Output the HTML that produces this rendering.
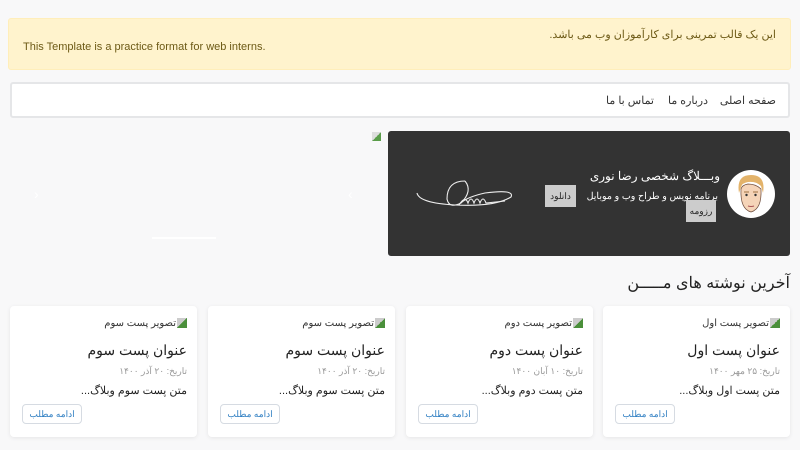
<!DOCTYPE html>
<html><head><meta charset="utf-8">
<style>
*{box-sizing:border-box;margin:0;padding:0}
body{width:800px;height:450px;overflow:hidden;background:#f8f8f9;font-family:"Liberation Sans","Noto Sans CJK SC",sans-serif;position:relative;direction:rtl}
.a{position:absolute}
.alert{left:8px;top:18px;width:783px;height:52px;background:#fff3cd;border:1px solid #ffeeba;border-radius:3px;color:#6d5a16;font-size:11px}
.nav{left:10px;top:82px;width:780px;height:36px;background:#fff;border:2px solid #e5e6e8;border-radius:3px;font-size:11px;color:#333}
.hero{left:388px;top:131px;width:402px;height:125px;background:#333;border-radius:3px;color:#fff}
.card{width:187px;height:131px;top:306px;background:#fff;border-radius:4px;box-shadow:0 1px 4px rgba(0,0,0,.08)}
.card .im{right:10px;top:12px;font-size:10px;color:#333}
.card .t{right:10px;top:36px;font-size:14px;color:#222}
.card .d{right:10px;top:60px;font-size:9px;color:#999}
.card .x{right:10px;top:78px;font-size:11px;color:#222}
.card .b{left:12px;top:98px;width:60px;height:20px;border:1px solid #d6dbe2;border-radius:4px;font-size:9px;color:#2b7cc1;text-align:center;line-height:18px}
.bi{display:inline-block;width:10px;height:10px;background:linear-gradient(135deg,#ccc 50%,#4a8f3a 50%);vertical-align:middle;margin-left:1px}
</style></head><body>
<div class="a alert">
 <div class="a" style="right:14px;top:9px">این یک قالب تمرینی برای کارآموزان وب می باشد.</div>
 <div class="a" style="left:14px;top:22px;direction:ltr">This Template is a practice format for web interns.</div>
</div>
<div class="a nav">
 <div class="a" style="right:12px;top:10px">صفحه اصلی</div>
 <div class="a" style="right:80px;top:10px">درباره ما</div>
 <div class="a" style="right:134px;top:10px">تماس با ما</div>
</div>
<div class="a" style="left:372px;top:132px;width:9px;height:9px;background:linear-gradient(135deg,#ddd 50%,#5a9d4a 50%)"></div>
<div class="a" style="left:34px;top:186px;color:#fff;font-size:14px">‹</div>
<div class="a" style="left:348px;top:186px;color:#fff;font-size:14px">›</div>
<div class="a" style="left:152px;top:237px;width:64px;height:2px;background:#fff"></div>
<div class="a hero">
 <svg class="a" style="right:14px;top:38px" width="50" height="50" viewBox="0 0 50 50">
  <circle cx="25" cy="25" r="24" fill="#fff"/>
  <path d="M13 24 Q10 6 25 6 Q40 6 37 24 L35 17 Q30 12 22 13 Q16 14 15 18Z" fill="#e3b36a"/>
  <path d="M15 20 Q14 40 25 43 Q36 40 35 20 Q30 15 22 15 Q16 16 15 20Z" fill="#f5d4b8" stroke="#6b4a3a" stroke-width=".7"/>
  <circle cx="20.5" cy="26" r="1.2" fill="#333"/><circle cx="29.5" cy="26" r="1.2" fill="#333"/>
  <path d="M18 23 L23 23 M27 23 L32 23" stroke="#a07040"/>
  <path d="M22 37 Q25 38 28 37" stroke="#a55" fill="none"/>
 </svg>
 <div class="a" style="right:70px;top:38px;font-size:12px">وبـــلاگ شخصی رضا نوری</div>
 <div class="a" style="right:72px;top:60px;font-size:9.5px">برنامه نویس و طراح وب و موبایل</div>
 <div class="a" style="left:298px;top:69px;width:30px;height:22px;background:#ccc;color:#222;font-size:9px;line-height:22px;text-align:center">رزومه</div>
 <div class="a" style="left:157px;top:54px;width:31px;height:22px;background:#ccc;color:#222;font-size:9px;line-height:22px;text-align:center">دانلود</div>
 <svg class="a" style="left:27px;top:44px" width="104" height="40" viewBox="0 0 104 40">
  <g stroke="#eee" stroke-width="1.1" fill="none">
   <path d="M2 18 Q4 28 40 30 Q80 32 96 22 Q100 14 70 18 Q52 22 46 28"/>
   <path d="M50 6 Q32 6 32 24 Q34 34 46 28 Q58 16 50 6"/>
   <path d="M44 30 Q50 20 53 28 Q56 20 59 28 Q62 20 65 28 Q68 20 71 28 L90 26"/>
  </g>
 </svg>
</div>
<div class="a" style="right:10px;top:273px;font-size:16px;color:#222">آخرین نوشته های مـــــن</div>

<div class="a card" style="left:603px"><div class="a im"><span class="bi"></span>تصویر پست اول</div><div class="a t">عنوان پست اول</div><div class="a d">تاریخ: ۲۵ مهر ۱۴۰۰</div><div class="a x">متن پست اول وبلاگ...</div><div class="a b">ادامه مطلب</div></div>
<div class="a card" style="left:406px"><div class="a im"><span class="bi"></span>تصویر پست دوم</div><div class="a t">عنوان پست دوم</div><div class="a d">تاریخ: ۱۰ آبان ۱۴۰۰</div><div class="a x">متن پست دوم وبلاگ...</div><div class="a b">ادامه مطلب</div></div>
<div class="a card" style="left:208px"><div class="a im"><span class="bi"></span>تصویر پست سوم</div><div class="a t">عنوان پست سوم</div><div class="a d">تاریخ: ۲۰ آذر ۱۴۰۰</div><div class="a x">متن پست سوم وبلاگ...</div><div class="a b">ادامه مطلب</div></div>
<div class="a card" style="left:10px"><div class="a im"><span class="bi"></span>تصویر پست سوم</div><div class="a t">عنوان پست سوم</div><div class="a d">تاریخ: ۲۰ آذر ۱۴۰۰</div><div class="a x">متن پست سوم وبلاگ...</div><div class="a b">ادامه مطلب</div></div>
</body></html>
